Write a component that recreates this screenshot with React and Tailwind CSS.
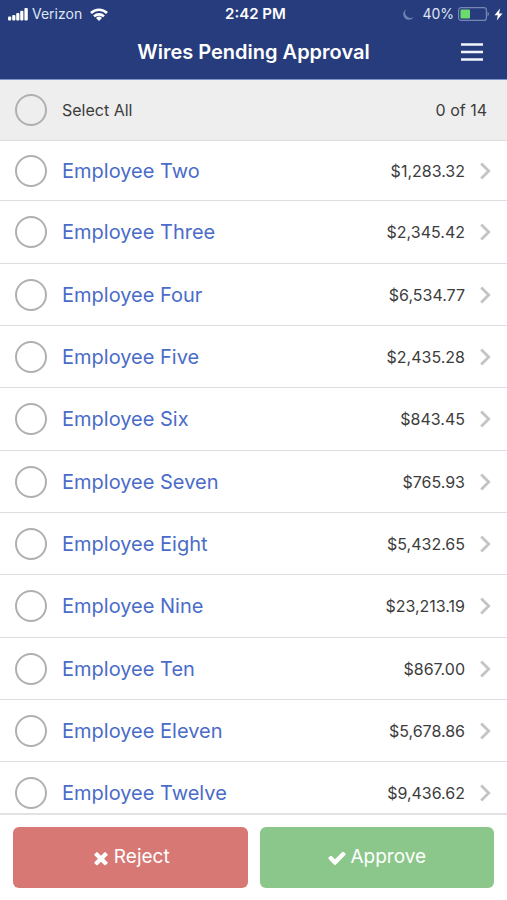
const wires = [
  ["Employee Two", "$1,283.32"],
  ["Employee Three", "$2,345.42"],
  ["Employee Four", "$6,534.77"],
  ["Employee Five", "$2,435.28"],
  ["Employee Six", "$843.45"],
  ["Employee Seven", "$765.93"],
  ["Employee Eight", "$5,432.65"],
  ["Employee Nine", "$23,213.19"],
  ["Employee Ten", "$867.00"],
  ["Employee Eleven", "$5,678.86"],
  ["Employee Twelve", "$9,436.62"],
];

const RoundCheckbox = (props) => (
  <input
    type="checkbox"
    className="size-8 shrink-0 appearance-none rounded-full border-2 border-[#b0b0b0] checked:bg-[#4a6cc8]"
    {...props}
  />
);

const StatusBar = () => (
  <div className="grid grid-cols-[1fr_auto_1fr] items-center pt-1 pr-1 pl-2 text-sm leading-5 text-[#dfe5f5]">
    <div className="flex items-center gap-1">
      <svg width="20" height="13" viewBox="0 0 20 13" fill="#fff" aria-hidden="true">
        <rect x="0" y="8.5" width="3.2" height="4" rx="1" />
        <rect x="4.2" y="7" width="3.2" height="5.5" rx="1" />
        <rect x="8.2" y="5" width="3.2" height="7.5" rx="1" />
        <rect x="12.2" y="2.7" width="3.2" height="9.8" rx="1" />
        <rect x="16.4" y="0" width="3.4" height="12.5" rx="1" />
      </svg>
      <span>Verizon</span>
      <svg className="ml-1" width="18" height="13" viewBox="0 0 18 13" fill="none" stroke="#fff" strokeWidth="2.6" aria-hidden="true">
        <path d="M1 5a11.4 11.4 0 0 1 16 0" />
        <path d="M4 8.4a7.2 7.2 0 0 1 10 0" />
        <path d="M9 13 6 10a4.3 4.3 0 0 1 6 0Z" fill="#fff" stroke="none" />
      </svg>
    </div>
    <div className="text-[15px] font-semibold text-white">2:42 PM</div>
    <div className="flex items-center justify-end">
      <svg className="mr-2" width="11" height="11" viewBox="0 0 11 11" fill="#6f80b3" aria-hidden="true">
        <path d="M3.2.2A5.6 5.6 0 1 0 10.8 7.7 5.4 5.4 0 0 1 3.2.2Z" />
      </svg>
      <span>40%</span>
      <svg className="ml-1" width="32" height="14" viewBox="0 0 32 14" aria-hidden="true">
        <rect x=".6" y=".6" width="27.8" height="12.8" rx="2.5" fill="none" stroke="#7786b5" strokeWidth="1.2" />
        <rect x="2.5" y="2.5" width="9.5" height="9" rx="1" fill="#6ddb6b" />
        <path d="M29.5 4.5q3 2.500 0 5Z" fill="#7786b5" />
      </svg>
      <svg className="ml-1" width="9" height="13" viewBox="0 0 8 13" fill="#fff" aria-hidden="true">
        <path d="M5.5.5 0 7.3h3.300L2.300 12.5 8 5.600H4.600Z" />
      </svg>
    </div>
  </div>
);

const Chevron = () => (
  <svg width="11" height="18" viewBox="0 0 11 18" fill="none" stroke="#c4c4c6" strokeWidth="2.8" aria-hidden="true">
    <path d="M1.2 1.5 8.7 9l-7.5 7.5" />
  </svg>
);

export default function App() {
  return (
    <div className="flex h-screen flex-col bg-white font-[Inter,'Liberation_Sans',sans-serif] text-[#3c3c3c]">
      <header className="border-b border-[#7d95cb] bg-[#273c7c] text-white">
        <StatusBar />
        <div className="grid h-[55px] grid-cols-[1fr_auto_1fr] items-center px-5">
          <h1 className="col-start-2 text-xl font-semibold">Wires Pending Approval</h1>
          <button type="button" aria-label="Menu" className="mr-1 justify-self-end">
            <svg width="22" height="18" viewBox="0 0 22 18" stroke="#f2f5fb" strokeWidth="2.4" aria-hidden="true">
              <path d="M0 1.5h22M0 9h22M0 16.5h22" />
            </svg>
          </button>
        </div>
      </header>

      <div className="flex h-[61px] shrink-0 items-center border-b border-[#dcdcdc] bg-[#eeeeee] pr-5 pl-[15px] text-base">
        <label className="flex flex-1 items-center gap-[15px]">
          <RoundCheckbox />
          Select All
        </label>
        <span>0 of 14</span>
      </div>

      <ul className="min-h-0 flex-1 overflow-y-auto [scrollbar-width:none]">
        {wires.map(([name, amount]) => (
          <li
            key={name}
            className="flex h-[62px] items-center border-b border-[#dedee0] pr-4 pl-[15px] first:h-[60px] nth-[3n+2]:h-[63px]"
          >
            <RoundCheckbox aria-label={`Select ${name}`} />
            <a href="#wire" className="flex flex-1 items-center pl-[15px]">
              <span className="flex-1 text-xl text-[#4a6cc8]">{name}</span>
              <span className="mr-[15px] text-base">{amount}</span>
              <Chevron />
            </a>
          </li>
        ))}
      </ul>

      <footer className="grid grid-cols-2 gap-3 border-t-2 border-[#e2e2e4] px-[13px] py-3 text-[19px] text-white">
        <button type="button" className="flex h-[61px] items-center justify-center gap-[3px] rounded-md bg-[#d87875]">
          <svg width="20" height="20" viewBox="0 0 1792 1792" fill="currentColor" aria-hidden="true">
            <path d="M1490 1322q0 40-28 68l-136 136q-28 28-68 28t-68-28l-294-294-294 294q-28 28-68 28t-68-28l-136-136q-28-28-28-68t28-68l294-294-294-294q-28-28-28-68t28-68l136-136q28-28 68-28t68 28l294 294 294-294q28-28 68-28t68 28l136 136q28 28 28 68t-28 68l-294 294 294 294q28 28 28 68z" />
          </svg>
          Reject
        </button>
        <button type="button" className="flex h-[61px] items-center justify-center gap-[3px] rounded-md bg-[#8bc78a]">
          <svg width="20" height="20" viewBox="0 0 1792 1792" fill="currentColor" aria-hidden="true">
            <path d="M1671 566q0 40-28 68l-724 724-136 136q-28 28-68 28t-68-28l-136-136-362-362q-28-28-28-68t28-68l136-136q28-28 68-28t68 28l294 295 656-657q28-28 68-28t68 28l136 136q28 28 28 68z" />
          </svg>
          Approve
        </button>
      </footer>
    </div>
  );
}
